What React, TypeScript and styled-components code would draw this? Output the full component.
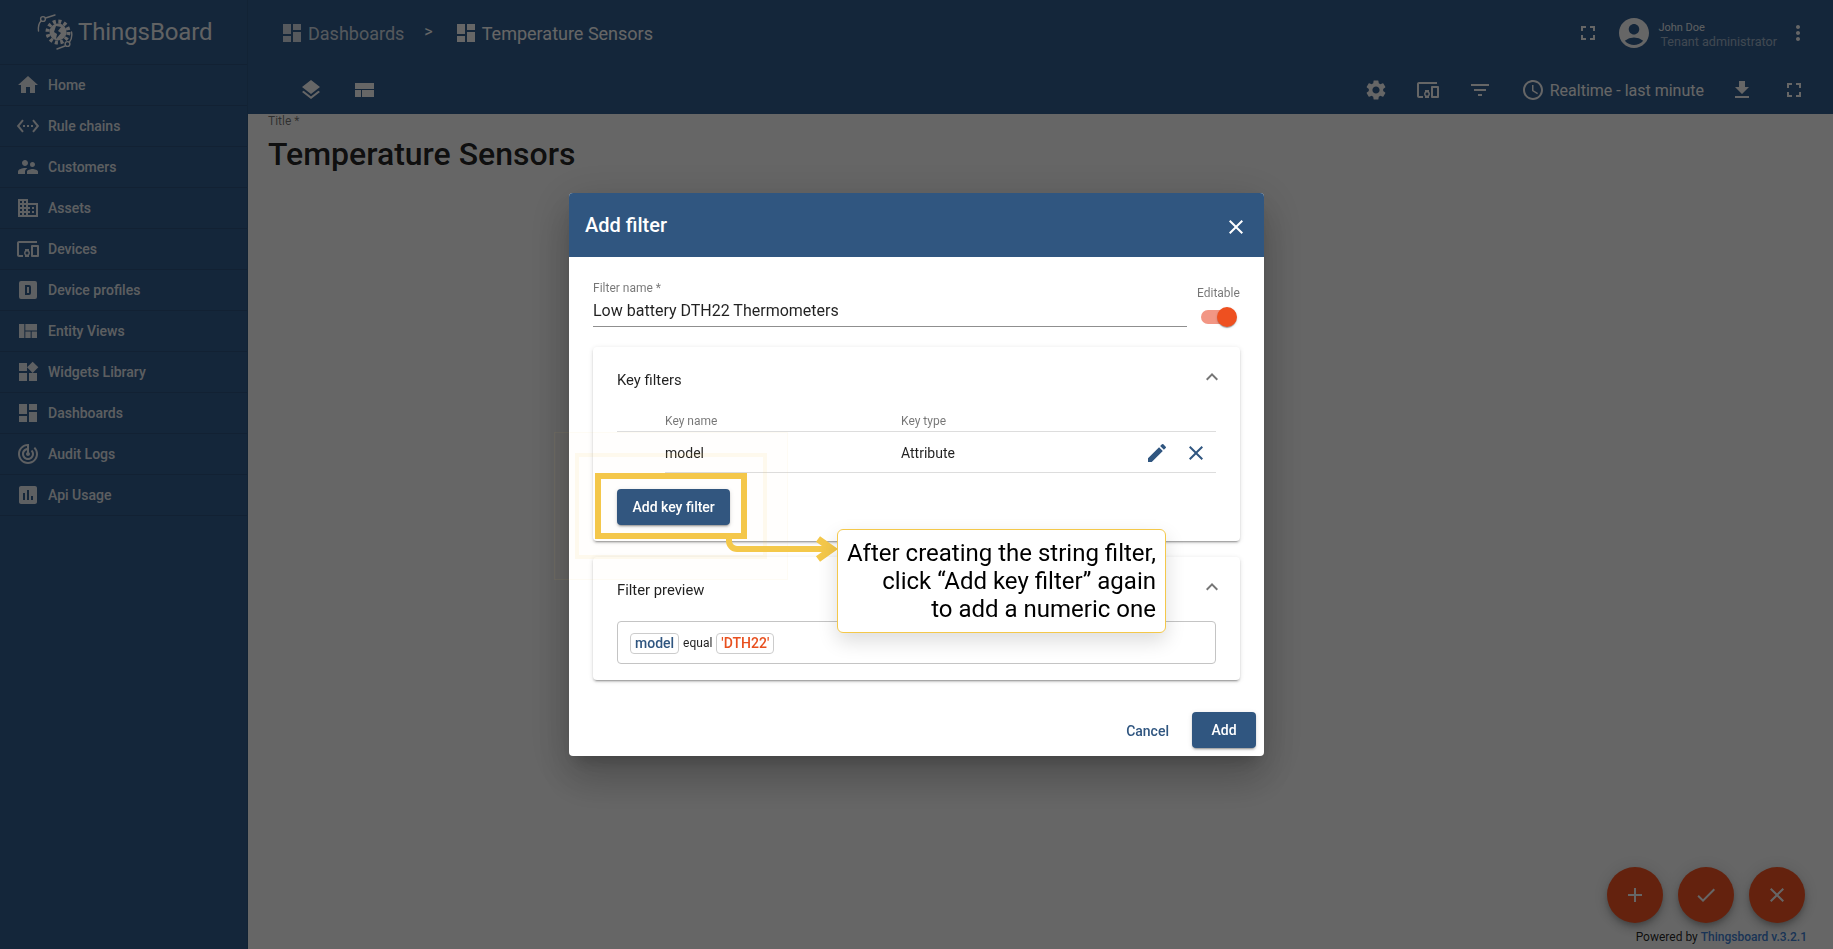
import React from 'react';
import styled, { createGlobalStyle } from 'styled-components';
import {
  MdHome, MdSettingsEthernet, MdSupervisorAccount, MdDomain, MdDevicesOther, MdViewQuilt, MdWidgets,
  MdDashboard, MdTrackChanges, MdAssessment, MdLayers, MdSettings, MdFilterList, MdSchedule,
  MdFileDownload, MdFullscreen, MdAccountCircle, MdMoreVert, MdEdit, MdClose, MdExpandLess, MdAdd, MdCheck,
} from 'react-icons/md';

const primary = '#305680';
// toolbar and sidebar sit under the backdrop
const chrome = '#345f92';
const accent = '#fb5523';

const GlobalStyle = createGlobalStyle`
  html, body {
    margin: 0;
    padding: 0;
    height: 100%;
    overflow: hidden;
    font-family: Roboto, "Liberation Sans", sans-serif;
    background: #fff;
  }
  * { box-sizing: border-box; }
`;

const Shell = styled.div`
  display: flex;
  height: 100vh;
`;

const Sidebar = styled.nav`
  width: 248px;
  flex: none;
  background: ${chrome};
  border-right: 1px solid rgba(0, 0, 0, 0.08);
`;

const LogoRow = styled.div`
  height: 65px;
  display: flex;
  align-items: center;
  gap: 5px;
  padding-left: 37px;
  border-bottom: 1px solid rgba(0, 0, 0, 0.12);
`;

const LogoText = styled.span`
  font-size: 24px;
  color: rgba(255, 255, 255, 0.95);
  letter-spacing: -0.1px;
`;

const NavItem = styled.div`
  height: 41px;
  display: flex;
  align-items: center;
  gap: 8px;
  padding-left: 16px;
  font-size: 14px;
  font-weight: 500;
  color: rgba(255, 255, 255, 0.9);
  border-bottom: 1px solid rgba(0, 0, 0, 0.12);
  svg { font-size: 24px; flex: none; }
`;

const Main = styled.main`
  flex: 1;
  min-width: 0;
  display: flex;
  flex-direction: column;
`;

const Topbar = styled.header`
  height: 114px;
  flex: none;
  background: ${chrome};
  color: #fff;
  font-size: 24px;
`;

const TopRow = styled.div`
  height: 64px;
  display: flex;
  align-items: center;
  padding: 2px 23px 0 32px;
`;

const ToolRow = styled.div`
  height: 50px;
  display: flex;
  align-items: center;
  padding: 2px 27px 0 51px;
`;

const Crumb = styled.span<{ $dim?: boolean }>`
  display: flex;
  align-items: center;
  gap: 4px;
  font-size: 18px;
  color: rgba(255, 255, 255, ${(p) => (p.$dim ? 0.8 : 1)});
`;

const CrumbArrow = styled.span`
  margin: 0 21px 0 20px;
  font-size: 16px;
  position: relative;
  top: -2px;
`;

const Spacer = styled.div`
  flex: 1;
`;

const Tool = styled.span<{ $ml?: number }>`
  display: flex;
  margin-left: ${(p) => p.$ml ?? 0}px;
`;

const Avatar = styled.span`
  display: flex;
  font-size: 36px;
  margin-left: 16px;
`;

const UserBlock = styled.div`
  display: flex;
  flex-direction: column;
  margin: 4px 9px 0 6px;
`;

const UserName = styled.span`
  font-size: 11px;
  line-height: 14px;
  color: rgba(255, 255, 255, 0.9);
`;

const UserRole = styled.span`
  font-size: 12.6px;
  line-height: 14px;
  margin-left: 2px;
  color: rgba(255, 255, 255, 0.55);
`;

const TimeWindow = styled.span`
  display: flex;
  align-items: center;
  gap: 5px;
  margin-left: 29px;
  font-size: 16px;
  svg { font-size: 24px; }
`;

const Canvas = styled.section`
  flex: 1;
  position: relative;
  padding-left: 20px;
  background: #fff;
`;

const TitleLabel = styled.div`
  font-size: 12px;
  line-height: 14px;
  color: rgba(0, 0, 0, 0.54);
`;

const TitleValue = styled.div`
  margin-top: 7px;
  font-size: 32px;
  line-height: 38px;
  font-weight: 500;
  color: rgba(0, 0, 0, 0.87);
`;

const FabRow = styled.div`
  position: absolute;
  right: 28px;
  bottom: 26px;
  display: flex;
  gap: 15px;
`;

const Fab = styled.span`
  width: 56px;
  height: 56px;
  border-radius: 50%;
  background: ${accent};
  color: #fff;
  font-size: 24px;
  display: flex;
  align-items: center;
  justify-content: center;
  box-shadow: 0 3px 5px -1px rgba(0, 0, 0, 0.2), 0 6px 10px 0 rgba(0, 0, 0, 0.14), 0 1px 18px 0 rgba(0, 0, 0, 0.12);
`;

const Powered = styled.div`
  position: absolute;
  right: 26px;
  bottom: 5px;
  font-size: 12px;
  line-height: 14px;
  color: rgba(0, 0, 0, 0.87);
  b { color: #4283d6; font-weight: 500; }
`;

const Backdrop = styled.div`
  position: fixed;
  inset: 0;
  background: rgba(0, 0, 0, 0.6);
  display: flex;
  align-items: center;
  justify-content: center;
`;

const Dialog = styled.div`
  width: 695px;
  position: relative;
  background: #fff;
  border-radius: 4px;
  box-shadow: 0 11px 15px -7px rgba(0, 0, 0, 0.2), 0 24px 38px 3px rgba(0, 0, 0, 0.14), 0 9px 46px 8px rgba(0, 0, 0, 0.12);
`;

const DialogHead = styled.div`
  height: 64px;
  display: flex;
  align-items: center;
  justify-content: space-between;
  padding: 0 16px;
  background: ${primary};
  border-radius: 4px 4px 0 0;
  color: #fff;
  font-size: 20px;
  font-weight: 500;
  svg { font-size: 24px; margin-top: 4px; }
`;

const DialogBody = styled.div`
  padding: 24px 24px 24px;
`;

const NameRow = styled.div`
  display: flex;
  gap: 10px;
`;

const NameField = styled.div`
  flex: 1;
  height: 46px;
  border-bottom: 1px solid #8f8f8f;
`;

const FieldLabel = styled.div`
  font-size: 12px;
  line-height: 14px;
  color: rgba(0, 0, 0, 0.54);
`;

const FieldValue = styled.div`
  margin-top: 6px;
  font-size: 16px;
  line-height: 20px;
  color: rgba(0, 0, 0, 0.87);
`;

const ToggleCol = styled.div`
  width: 43px;
  padding-top: 5px;
`;

const Toggle = styled.div`
  position: relative;
  width: 34px;
  height: 14px;
  margin: 10px 0 0 4px;
  border-radius: 7px;
  background: #f29684;
`;

const ToggleThumb = styled.span`
  position: absolute;
  right: -2px;
  top: -3px;
  width: 20px;
  height: 20px;
  border-radius: 50%;
  background: #ee5020;
  box-shadow: 0 2px 1px -1px rgba(0, 0, 0, 0.2), 0 1px 1px 0 rgba(0, 0, 0, 0.14), 0 1px 3px 0 rgba(0, 0, 0, 0.12);
`;

const Card = styled.div`
  margin-top: 16px;
  padding: 0 24px 16px;
  border-radius: 4px;
  background: #fff;
  box-shadow: 0 3px 1px -2px rgba(0, 0, 0, 0.2), 0 2px 2px 0 rgba(0, 0, 0, 0.14), 0 1px 5px 0 rgba(0, 0, 0, 0.12);
`;

const FirstCard = styled(Card)`
  margin-top: 20px;
`;

const CardHead = styled.div`
  height: 64px;
  padding-top: 1px;
  display: flex;
  align-items: center;
  justify-content: space-between;
  font-size: 14.8px;
  color: rgba(0, 0, 0, 0.87);
  svg {
    font-size: 24px;
    color: rgba(0, 0, 0, 0.54);
    margin: 0 -8px 6px 0;
  }
`;

const FilterHead = styled.div`
  height: 21px;
  display: grid;
  grid-template-columns: 236px 1fr;
  align-items: center;
  padding-left: 48px;
  font-size: 12px;
  color: rgba(0, 0, 0, 0.54);
  border-bottom: 1px solid #ddd;
`;

const FilterRow = styled.div`
  height: 41px;
  margin-left: 48px;
  padding-top: 1px;
  display: grid;
  grid-template-columns: 236px 1fr auto;
  align-items: center;
  font-size: 14px;
  color: rgba(0, 0, 0, 0.87);
  border-bottom: 1px solid #ddd;
`;

const RowActions = styled.div`
  display: flex;
  gap: 15px;
  padding-right: 8px;
  color: ${primary};
  svg { font-size: 24px; display: block; }
`;

const RaisedButton = styled.button`
  height: 36px;
  min-width: 64px;
  padding: 0 15.5px;
  border: none;
  border-radius: 4px;
  background: ${primary};
  color: #fff;
  font: 500 14px Roboto, sans-serif;
  box-shadow: 0 3px 1px -2px rgba(0, 0, 0, 0.2), 0 2px 2px 0 rgba(0, 0, 0, 0.14), 0 1px 5px 0 rgba(0, 0, 0, 0.12);
`;

const AddKeyButton = styled(RaisedButton)`
  display: block;
  margin-top: 16px;
`;

const PreviewBox = styled.div`
  height: 43px;
  display: flex;
  align-items: center;
  gap: 4px;
  padding: 1px 12px 0;
  border: 1px solid #c4c4c4;
  border-radius: 4px;
  font-size: 12px;
  color: rgba(0, 0, 0, 0.87);
`;

const Chip = styled.span<{ $color: string }>`
  height: 21px;
  display: flex;
  align-items: center;
  padding: 0 4px;
  border: 1px solid #ccc;
  border-radius: 4px;
  font-size: 14px;
  font-weight: 500;
  color: ${(p) => p.$color};
`;

const DialogActions = styled.div`
  display: flex;
  align-items: center;
  justify-content: flex-end;
  padding: 0 8px 8px;
  margin-top: 8px;
`;

const CancelLink = styled.span`
  margin-right: 23px;
  padding-top: 1px;
  font-size: 14px;
  font-weight: 500;
  color: ${primary};
`;

const Highlight = styled.div`
  position: absolute;
  left: 26px;
  top: 280px;
  width: 152px;
  height: 66px;
  border: 6px solid #f4c84a;
  &::before {
    content: '';
    position: absolute;
    inset: -26px;
    border: 4px solid rgba(244, 200, 74, 0.09);
  }
  &::after {
    content: '';
    position: absolute;
    inset: -47px;
    border: 1px solid rgba(244, 200, 74, 0.05);
    background: rgba(244, 200, 74, 0.01);
  }
`;

const Connector = styled.svg`
  position: absolute;
  left: 151px;
  top: 342px;
`;

const Callout = styled.div`
  position: absolute;
  left: 268px;
  top: 336px;
  width: 329px;
  height: 104px;
  padding: 9px 9px 0 0;
  background: #fff;
  border: 1px solid #f4c84a;
  border-radius: 6px;
  box-shadow: 0 8px 20px rgba(0, 0, 0, 0.14);
  text-align: right;
  font-size: 24px;
  line-height: 28px;
  color: #000;
`;

const navItems: [string, React.ReactNode][] = [
  ['Home', <MdHome />],
  ['Rule chains', <MdSettingsEthernet />],
  ['Customers', <MdSupervisorAccount />],
  ['Assets', <MdDomain />],
  ['Devices', <MdDevicesOther />],
  ['Device profiles', <DeviceProfileIcon />],
  ['Entity Views', <MdViewQuilt />],
  ['Widgets Library', <MdWidgets />],
  ['Dashboards', <MdDashboard />],
  ['Audit Logs', <MdTrackChanges />],
  ['Api Usage', <MdAssessment />],
];

function DeviceProfileIcon() {
  return (
    <svg width="1em" height="1em" viewBox="0 0 24 24" fill="currentColor">
      <path d="M9,7V17H13A2,2 0 0,0 15,15V9A2,2 0 0,0 13,7H9M5,3H19A2,2 0 0,1 21,5V19A2,2 0 0,1 19,21H5A2,2 0 0,1 3,19V5A2,2 0 0,1 5,3M11,9H13V15H11V9Z" fillRule="evenodd" />
    </svg>
  );
}

function LayoutIcon() {
  return (
    <svg width="24" height="24" viewBox="0 0 24 24" fill="currentColor">
      <path d="M3 5h19v6H3zM3 12h6v7H3zM10 12h12v7H10z" />
    </svg>
  );
}

function Logo() {
  return (
    <svg width="36" height="38" viewBox="0 0 36 38" fill="none" stroke="#fff">
      <circle cx="21" cy="19" r="8.5" fill="#fff" stroke="none" />
      <circle cx="21" cy="19" r="10.5" strokeWidth="4" strokeDasharray="3 2.5" />
      <path d="M19 13l5 1-3 4 3 2-5 6 1-5-3-2z" fill={chrome} stroke="none" />
      <circle cx="6" cy="6" r="2.4" strokeWidth="1.4" />
      <path d="M1.5 18C1 13 2 10 4 8M8.5 5L18 2" strokeWidth="1.4" strokeLinecap="round" />
      <circle cx="30.5" cy="31" r="2.4" strokeWidth="1.4" />
      <path d="M34.5 19C35.5 24 34 27 32.5 29M28 33L20 36" strokeWidth="1.4" strokeLinecap="round" />
    </svg>
  );
}

export default function App() {
  return (
    <>
      <GlobalStyle />
      <Shell>
        <Sidebar>
          <LogoRow>
            <Logo />
            <LogoText>ThingsBoard</LogoText>
          </LogoRow>
          {navItems.map(([label, icon]) => (
            <NavItem key={label}>
              {icon}
              {label}
            </NavItem>
          ))}
        </Sidebar>
        <Main>
          <Topbar>
            <TopRow>
              <Crumb $dim>
                <MdDashboard size={24} />
                Dashboards
              </Crumb>
              <CrumbArrow>&gt;</CrumbArrow>
              <Crumb>
                <MdDashboard size={24} />
                Temperature Sensors
              </Crumb>
              <Spacer />
              <Tool><MdFullscreen /></Tool>
              <Avatar><MdAccountCircle /></Avatar>
              <UserBlock>
                <UserName>John Doe</UserName>
                <UserRole>Tenant administrator</UserRole>
              </UserBlock>
              <Tool><MdMoreVert /></Tool>
            </TopRow>
            <ToolRow>
              <Tool><MdLayers /></Tool>
              <Tool $ml={29}><LayoutIcon /></Tool>
              <Spacer />
              <Tool><MdSettings /></Tool>
              <Tool $ml={28}><MdDevicesOther /></Tool>
              <Tool $ml={28}><MdFilterList /></Tool>
              <TimeWindow>
                <MdSchedule />
                Realtime - last minute
              </TimeWindow>
              <Tool $ml={26}><MdFileDownload /></Tool>
              <Tool $ml={28}><MdFullscreen /></Tool>
            </ToolRow>
          </Topbar>
          <Canvas>
            <TitleLabel>Title *</TitleLabel>
            <TitleValue>Temperature Sensors</TitleValue>
            <FabRow>
              <Fab><MdAdd /></Fab>
              <Fab><MdCheck /></Fab>
              <Fab><MdClose /></Fab>
            </FabRow>
            <Powered>Powered by <b>Thingsboard v.3.2.1</b></Powered>
          </Canvas>
        </Main>
      </Shell>
      <Backdrop>
        <Dialog>
          <DialogHead>
            Add filter
            <MdClose />
          </DialogHead>
          <DialogBody>
            <NameRow>
              <NameField>
                <FieldLabel>Filter name *</FieldLabel>
                <FieldValue>Low battery DTH22 Thermometers</FieldValue>
              </NameField>
              <ToggleCol>
                <FieldLabel>Editable</FieldLabel>
                <Toggle><ToggleThumb /></Toggle>
              </ToggleCol>
            </NameRow>
            <FirstCard>
              <CardHead>
                Key filters
                <MdExpandLess />
              </CardHead>
              <FilterHead>
                <span>Key name</span>
                <span>Key type</span>
              </FilterHead>
              <FilterRow>
                <span>model</span>
                <span>Attribute</span>
                <RowActions>
                  <MdEdit />
                  <MdClose />
                </RowActions>
              </FilterRow>
              <AddKeyButton>Add key filter</AddKeyButton>
            </FirstCard>
            <Card>
              <CardHead>
                Filter preview
                <MdExpandLess />
              </CardHead>
              <PreviewBox>
                <Chip $color={primary}>model</Chip>
                equal
                <Chip $color="#e8501f">'DTH22'</Chip>
              </PreviewBox>
            </Card>
          </DialogBody>
          <DialogActions>
            <CancelLink>Cancel</CancelLink>
            <RaisedButton>Add</RaisedButton>
          </DialogActions>
          <Highlight />
          <Connector width="120" height="32" viewBox="0 0 120 32" fill="none" stroke="#f4c84a" strokeWidth="6">
            <path d="M9 0V6a8 8 0 0 0 8 8H110" />
            <path d="M98 4L112 14L98 24" strokeWidth="7" />
          </Connector>
          <Callout>
            After creating the string filter,
            <br />
            click “Add key filter” again
            <br />
            to add a numeric one
          </Callout>
        </Dialog>
      </Backdrop>
    </>
  );
}
